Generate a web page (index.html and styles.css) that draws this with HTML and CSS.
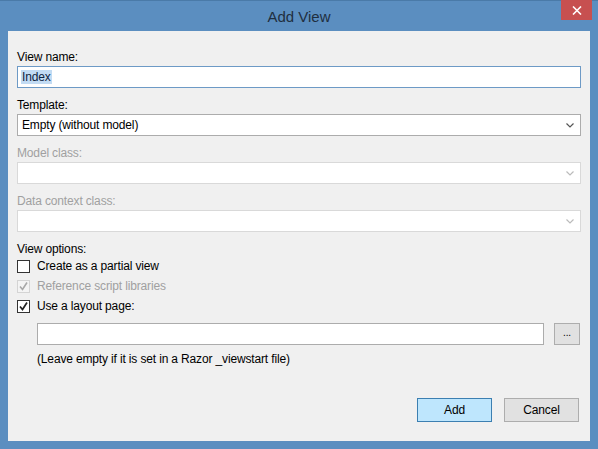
FILE: index.html
```html
<!DOCTYPE html>
<html>
<head>
<meta charset="utf-8">
<link rel="stylesheet" href="styles.css">
</head>
<body>
<div class="window">
  <div class="titlebar">
    <div class="title">Add View</div>
    <div class="close"><svg width="10" height="9" viewBox="0 0 10 9"><path d="M1 0.5 L9 8.5 M9 0.5 L1 8.5" stroke="#fff" stroke-width="1.6"/></svg></div>
  </div>
  <div class="content">
    <div class="field">
      <div class="label">View name:</div>
      <div class="input focused"><span class="sel">Index</span></div>
    </div>
    <div class="field">
      <div class="label">Template:</div>
      <div class="input select"><span>Empty (without model)</span><svg class="chev" width="8" height="5" viewBox="0 0 8 5"><path d="M0.5 0.5 L4 4 L7.5 0.5" fill="none" stroke="#555" stroke-width="1.2"/></svg></div>
    </div>
    <div class="field disabled">
      <div class="label">Model class:</div>
      <div class="input select"><span></span><svg class="chev" width="8" height="5" viewBox="0 0 8 5"><path d="M0.5 0.5 L4 4 L7.5 0.5" fill="none" stroke="#bbb" stroke-width="1.2"/></svg></div>
    </div>
    <div class="field disabled">
      <div class="label">Data context class:</div>
      <div class="input select"><span></span><svg class="chev" width="8" height="5" viewBox="0 0 8 5"><path d="M0.5 0.5 L4 4 L7.5 0.5" fill="none" stroke="#bbb" stroke-width="1.2"/></svg></div>
    </div>
    <div class="label options">View options:</div>
    <div class="check"><span class="box"></span><span>Create as a partial view</span></div>
    <div class="check disabled"><span class="box"><svg width="11" height="11" viewBox="0 0 11 11"><path d="M2 5.5 L4.5 8.5 L9 1.5" fill="none" stroke="#a8a8a8" stroke-width="1.6"/></svg></span><span>Reference script libraries</span></div>
    <div class="check"><span class="box"><svg width="11" height="11" viewBox="0 0 11 11"><path d="M2 5.5 L4.5 8.5 L9 1.5" fill="none" stroke="#222" stroke-width="1.7"/></svg></span><span>Use a layout page:</span></div>
    <div class="layout-row">
      <div class="input plain"></div>
      <div class="browse">...</div>
    </div>
    <div class="hint">(Leave empty if it is set in a Razor _viewstart file)</div>
    <div class="buttons">
      <div class="btn primary">Add</div>
      <div class="btn">Cancel</div>
    </div>
  </div>
</div>
</body>
</html>
```
FILE: styles.css
```css
html, body {
  margin: 0;
  padding: 0;
}
body {
  width: 598px;
  height: 449px;
  overflow: hidden;
  font-family: "Liberation Sans", Arial, sans-serif;
  font-size: 12px;
  letter-spacing: -0.15px;
  color: #000;
}
.window {
  width: 598px;
  height: 449px;
  background: #5b8ec0;
  box-sizing: border-box;
  border-top: 1px solid #4a7aa8;
  display: flex;
  flex-direction: column;
}
.titlebar {
  height: 30px;
  position: relative;
  display: flex;
  align-items: center;
  justify-content: center;
}
.title {
  font-family: "Liberation Sans", Arial, sans-serif;
  font-size: 15px;
  letter-spacing: 0;
  color: #1f2f40;
}
.close {
  position: absolute;
  right: 6px;
  top: -1px;
  width: 31px;
  height: 20px;
  background: #c75050;
  display: flex;
  align-items: center;
  justify-content: center;
}
.content {
  flex: 1;
  margin: 0 8px 8px 8px;
  background: #f0f0f0;
  padding: 18px 9px 0 9px;
  display: flex;
  flex-direction: column;
}
.field {
  margin-bottom: 9px;
}
.label {
  line-height: 17px;
  height: 17px;
}
.disabled .label, .check.disabled {
  color: #a0a0a0;
}
.input {
  height: 22px;
  box-sizing: border-box;
  background: #fff;
  border: 1px solid #acacac;
  display: flex;
  align-items: center;
  padding: 0 4px;
}
.input.focused {
  border-color: #6d9ac6;
}
.sel {
  background: #c2dbf3;
  color: #0e2440;
  line-height: 14px;
  padding: 0 1px;
  margin-left: -1px;
}
.select {
  justify-content: space-between;
  padding-right: 6px;
}
.disabled .input {
  border-color: #d9d9d9;
}
.options {
  margin-bottom: -2px;
}
.check {
  height: 20px;
  display: flex;
  align-items: center;
}
.box {
  width: 13px;
  height: 13px;
  box-sizing: border-box;
  border: 1px solid #333;
  background: #fff;
  margin-right: 7px;
  display: flex;
  align-items: center;
  justify-content: center;
}
.check.disabled .box {
  border-color: #d4d4d4;
  background: #f4f4f4;
}
.layout-row {
  display: flex;
  gap: 10px;
  margin: 7px 0 0 20px;
}
.layout-row .input {
  flex: 1;
  border-color: #acacac;
}
.browse {
  width: 26px;
  height: 22px;
  box-sizing: border-box;
  border: 1px solid #adadad;
  background: #e1e1e1;
  display: flex;
  align-items: center;
  justify-content: center;
  font-size: 10px;
  line-height: 10px;
  padding-bottom: 2px;
  margin-right: 1px;
}
.hint {
  margin: 6px 0 0 20px;
  line-height: 16px;
}
.buttons {
  margin-top: auto;
  margin-bottom: 19px;
  display: flex;
  justify-content: flex-end;
  gap: 12px;
  padding-right: 2px;
}
.btn {
  width: 75px;
  height: 24px;
  box-sizing: border-box;
  border: 1px solid #adadad;
  background: #e1e1e1;
  display: flex;
  align-items: center;
  justify-content: center;
}
.btn.primary {
  background: #bee6fd;
  border-color: #3c7fb1;
}
```
